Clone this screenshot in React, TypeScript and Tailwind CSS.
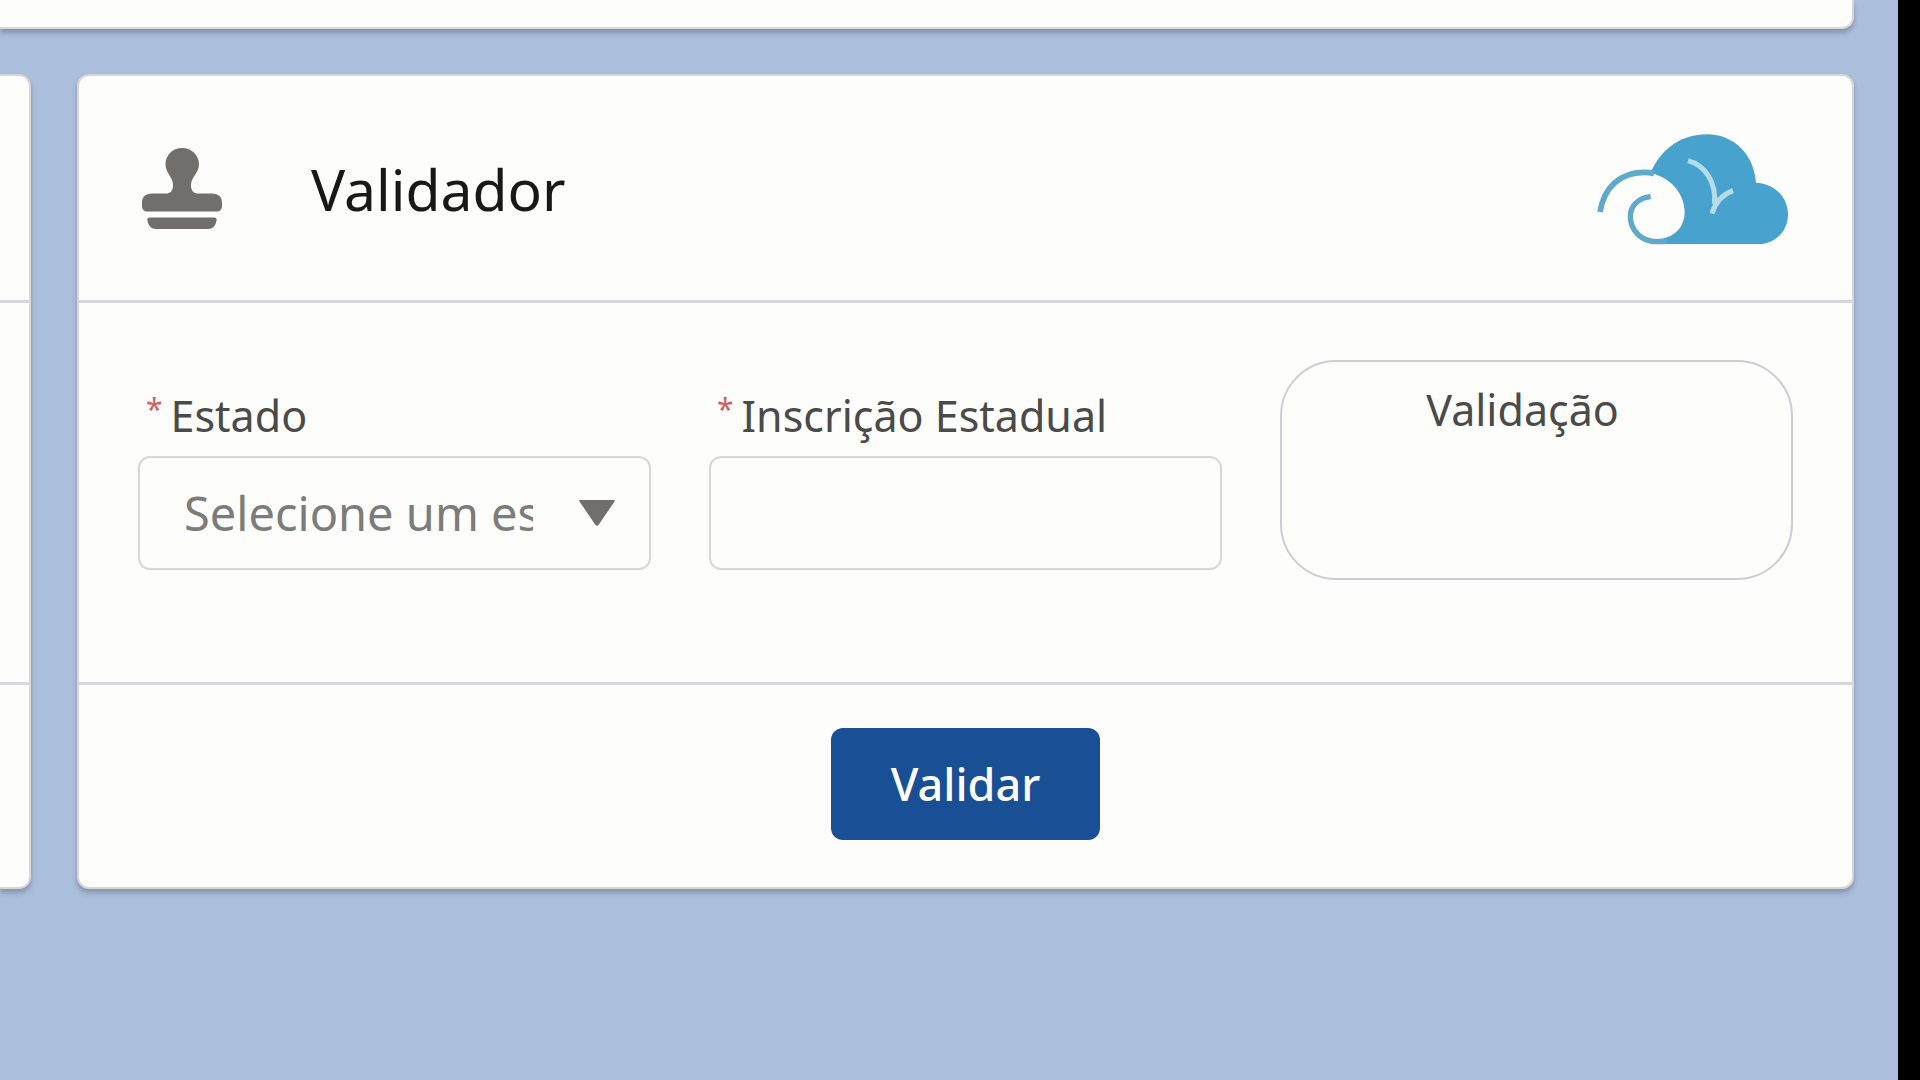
import { useState } from "react";

function StampIcon() {
  return (
    <svg aria-hidden="true" viewBox="0 0 80 81" className="h-[81px] w-20 shrink-0 fill-[#706f6b]">
      <path d="M40 0C30.500 0 23.500 7.500 23.500 16c0 9.500 7.500 12.500 7.500 21 0 6.500-3 8.500-7 8.500H10C3.500 45.500 0 49 0 54.500V58c0 3.500 2 5.500 5.500 5.500h69c3.500 0 5.500-2 5.500-5.500v-3.500c0-5.500-3.500-9-10-9H56.500c-4.500 0-7.500-2-7.500-8.500C49 28.500 57 25.500 57 16 57 7.500 49.500 0 40 0Z" />
      <path d="M8 69.500h64c2 0 3 1.200 2.600 3-1 5-4 8.500-8.600 8.500H14c-4.600 0-7.600-3.500-8.600-8.500C5 70.700 6 69.500 8 69.500Z" />
    </svg>
  );
}

function CloudLogo() {
  return (
    <svg role="img" aria-label="Cloud" viewBox="105 90 585 339" className="h-[113px] w-[195px] shrink-0">
      <path
        d="M273 210C305 138 366 97 441 97C523 97 583 160 588 242C642 244 684 285 684 337C684 385 651 420 606 426H285Z"
        fill="#48a2ce"
      />
      <path
        d="M120 330C126 260 172 211 246 211C320 211 374 270 374 330C374 377 340 411 290 411C244 411 211 383 211 344C211 311 234 289 270 286L180 360Z"
        fill="#fdfdfc"
      />
      <path d="M120 330C131 258 180 211 251 211C262 211 272 212 282 215" fill="none" stroke="#5fa9cb" strokeWidth="17" />
      <path d="M272 284C234 288 211 312 211 343C211 387 246 419 290 419H320" fill="none" stroke="#5fa9cb" strokeWidth="16" />
      <path
        d="M384 176C436 190 470 242 463 306M456 335C466 300 486 278 519 266"
        fill="none"
        stroke="#b4dceb"
        strokeWidth="15"
      />
    </svg>
  );
}

function Required() {
  return (
    <span aria-hidden="true" className="mr-2 pt-1.5 text-3xl leading-none text-[#cf5f63]">
      *
    </span>
  );
}

const cardStyle = "border-2 border-[#d8d6d8] bg-[#fdfdfc] shadow-[0_4px_5px_rgba(60,70,90,0.35)]";
const labelStyle = "flex items-start pl-2 text-[43px] leading-[56px] text-[#4a4a48]";
const fieldStyle = "h-[114px] w-full rounded-xl border-2 border-[#d9d7da] bg-[#fdfdfc] text-[47px]";

export default function App() {
  const [estado, setEstado] = useState("");
  const [inscricao, setInscricao] = useState("");

  return (
    <div className="flex min-h-screen flex-col overflow-hidden border-r-[22px] border-black bg-[#abbfdc] font-['Noto_Sans',sans-serif]">
      <div className={`mr-11 h-[29px] rounded-br-xl border-t-0 border-l-0 ${cardStyle}`} />

      <main className="mt-[45px] mr-11 flex gap-[46px]">
        <div className={`flex w-[31px] shrink-0 flex-col rounded-r-xl border-l-0 ${cardStyle}`}>
          <div className="h-[227px] border-b-3 border-[#d6d6df]" />
          <div className="h-[382px] border-b-3 border-[#d6d6df]" />
        </div>

        <section className={`flex-1 rounded-xl ${cardStyle}`}>
          <header className="flex items-center border-b-3 border-[#d6d6df] pt-14 pr-[62px] pb-[55px] pl-[63px]">
            <StampIcon />
            <h1 className="ml-[89px] flex-1 text-[57px] leading-[72px] text-[#181818]">Validador</h1>
            <CloudLogo />
          </header>

          <form onSubmit={(e) => e.preventDefault()}>
            <div className="grid grid-cols-3 gap-[58px] border-b-3 border-[#d6d6df] px-[59px] pt-[57px] pb-[102px]">
              <div className="pt-7">
                <label htmlFor="estado" className={labelStyle}>
                  <Required />
                  Estado
                </label>
                <div className="relative mt-3">
                  <select
                    id="estado"
                    required
                    value={estado}
                    onChange={(e) => setEstado(e.target.value)}
                    className={`appearance-none overflow-hidden pr-[116px] pl-11 text-[#7c7c7a] ${fieldStyle}`}
                  >
                    <option value="">Selecione um estado</option>
                    <option value="SP">São Paulo</option>
                    <option value="RJ">Rio de Janeiro</option>
                    <option value="MG">Minas Gerais</option>
                  </select>
                  <svg
                    aria-hidden="true"
                    viewBox="0 0 36 26"
                    className="pointer-events-none absolute top-1/2 right-9 h-[26px] w-9 -translate-y-1/2 fill-[#706f6b]"
                  >
                    <path d="M1 0h34q1.500 0 .5 1.500L19.500 25q-1.500 1.500-3 0L.5 1.500Q-.5 0 1 0Z" />
                  </svg>
                </div>
              </div>

              <div className="pt-7">
                <label htmlFor="inscricao" className={labelStyle}>
                  <Required />
                  Inscrição Estadual
                </label>
                <input
                  id="inscricao"
                  type="text"
                  required
                  value={inscricao}
                  onChange={(e) => setInscricao(e.target.value)}
                  className={`mt-3 px-11 text-[#4a4a48] ${fieldStyle}`}
                />
              </div>

              <div className="h-[220px] rounded-[56px] border-2 border-[#cfcdd4] pt-5 pr-7 text-center text-[43px] leading-[56px] text-[#4a4a48]">
                Validação
              </div>
            </div>

            <div className="flex justify-center pt-[43px] pb-[47px]">
              <button
                type="submit"
                className="h-28 rounded-xl bg-[#194f94] px-[60px] text-[45px] font-medium text-[#fdfdfc]"
              >
                Validar
              </button>
            </div>
          </form>
        </section>
      </main>
    </div>
  );
}
